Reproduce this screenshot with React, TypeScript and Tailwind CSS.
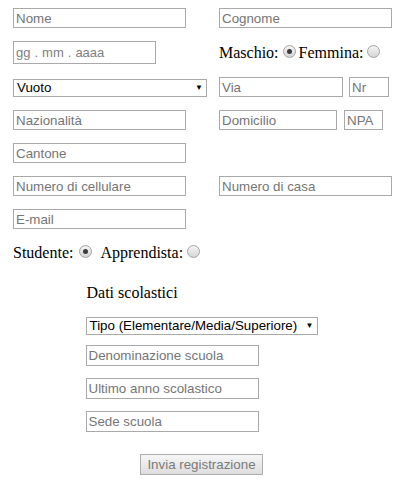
import React from "react";

const inputCls =
  "h-5 border border-[#a9a9a9] bg-white px-[2px] text-[13.33px] leading-none text-black outline-none placeholder:text-[#757575] font-['Liberation_Sans',Arial,sans-serif]";

function Radio({ checked }: { checked?: boolean }) {
  return (
    <span className="relative inline-block h-[13px] w-[13px] shrink-0 rounded-full border border-[#a3a3a3] bg-linear-to-b from-[#f4f4f4] to-[#d6d6d6]">
      {checked && (
        <span className="absolute left-[3px] top-[3px] h-[5px] w-[5px] rounded-full bg-[#3c3c3c]" />
      )}
    </span>
  );
}

function Select({ label, w }: { label: string; w: string }) {
  return (
    <div
      className={`flex h-[18px] items-center justify-between border border-[#a9a9a9] bg-white pl-[3px] pr-[3px] text-[13.33px] text-black font-['Liberation_Sans',Arial,sans-serif] ${w}`}
    >
      <span>{label}</span>
      <span className="text-[8px] leading-none">▼</span>
    </div>
  );
}

export default function App() {
  return (
    <div className="min-h-[491px] w-[403px] bg-white pt-2 text-[16px] leading-[18px] text-black font-['Liberation_Serif','Times_New_Roman',serif]">
      <div className="flex flex-col gap-[13px] pl-[13px]">
        {/* anagrafica */}
        <div className="flex gap-[33px]">
          <input className={`${inputCls} w-[173px]`} placeholder="Nome" />
          <input className={`${inputCls} w-[173px]`} placeholder="Cognome" />
        </div>

        <div className="flex items-center">
          <div className="flex h-[23px] w-[143px] items-center border border-[#a9a9a9] pl-[2px] text-[13px] text-[#808080] font-['Liberation_Sans',Arial,sans-serif]">
            <span>gg</span>
            <span className="mx-[4px]">.</span>
            <span>mm</span>
            <span className="mx-[4px]">.</span>
            <span>aaaa</span>
          </div>
          <div className="ml-[63px] flex items-center">
            <span>Maschio:</span>
            <span className="ml-[4px] mr-[3px]">
              <Radio checked />
            </span>
            <span>Femmina:</span>
            <span className="ml-[4px]">
              <Radio />
            </span>
          </div>
        </div>

        <div className="flex items-end">
          <Select label="Vuoto" w="w-[194px]" />
          <input className={`${inputCls} ml-[12px] w-[124px]`} placeholder="Via" />
          <input className={`${inputCls} ml-[6px] w-[40px]`} placeholder="Nr" />
        </div>

        <div className="flex">
          <input className={`${inputCls} w-[173px]`} placeholder="Nazionalità" />
          <input className={`${inputCls} ml-[33px] w-[118px]`} placeholder="Domicilio" />
          <input className={`${inputCls} ml-[7px] w-[39px]`} placeholder="NPA" />
        </div>

        <input className={`${inputCls} w-[173px]`} placeholder="Cantone" />

        <div className="flex gap-[33px]">
          <input className={`${inputCls} w-[173px]`} placeholder="Numero di cellulare" />
          <input className={`${inputCls} w-[173px]`} placeholder="Numero di casa" />
        </div>

        <input className={`${inputCls} w-[173px]`} placeholder="E-mail" />
      </div>

      <div className="mt-[15px] flex items-center pl-[13px]">
        <span>Studente:</span>
        <span className="ml-[6px] mr-[8px]">
          <Radio checked />
        </span>
        <span>Apprendista:</span>
        <span className="ml-[4px]">
          <Radio />
        </span>
      </div>

      {/* dati scolastici */}
      <div className="mx-auto mt-[22px] flex w-[232px] flex-col">
        <div className="pl-[1px]">Dati scolastici</div>
        <div className="mt-[15px]">
          <Select label="Tipo (Elementare/Media/Superiore)" w="w-[232px]" />
        </div>
        <div className="mt-[10px] flex flex-col gap-[12px]">
          <input className={`${inputCls} h-[21px] w-[173px]`} placeholder="Denominazione scuola" />
          <input className={`${inputCls} h-[21px] w-[173px]`} placeholder="Ultimo anno scolastico" />
          <input className={`${inputCls} h-[21px] w-[173px]`} placeholder="Sede scuola" />
        </div>
      </div>

      <div className="mt-[22px] flex justify-center">
        <button className="h-[21px] w-[123px] border border-[#adadad] bg-linear-to-b from-[#f6f6f6] to-[#dedede] text-[13.33px] text-[#7a7a7a] font-['Liberation_Sans',Arial,sans-serif]">
          Invia registrazione
        </button>
      </div>
    </div>
  );
}
